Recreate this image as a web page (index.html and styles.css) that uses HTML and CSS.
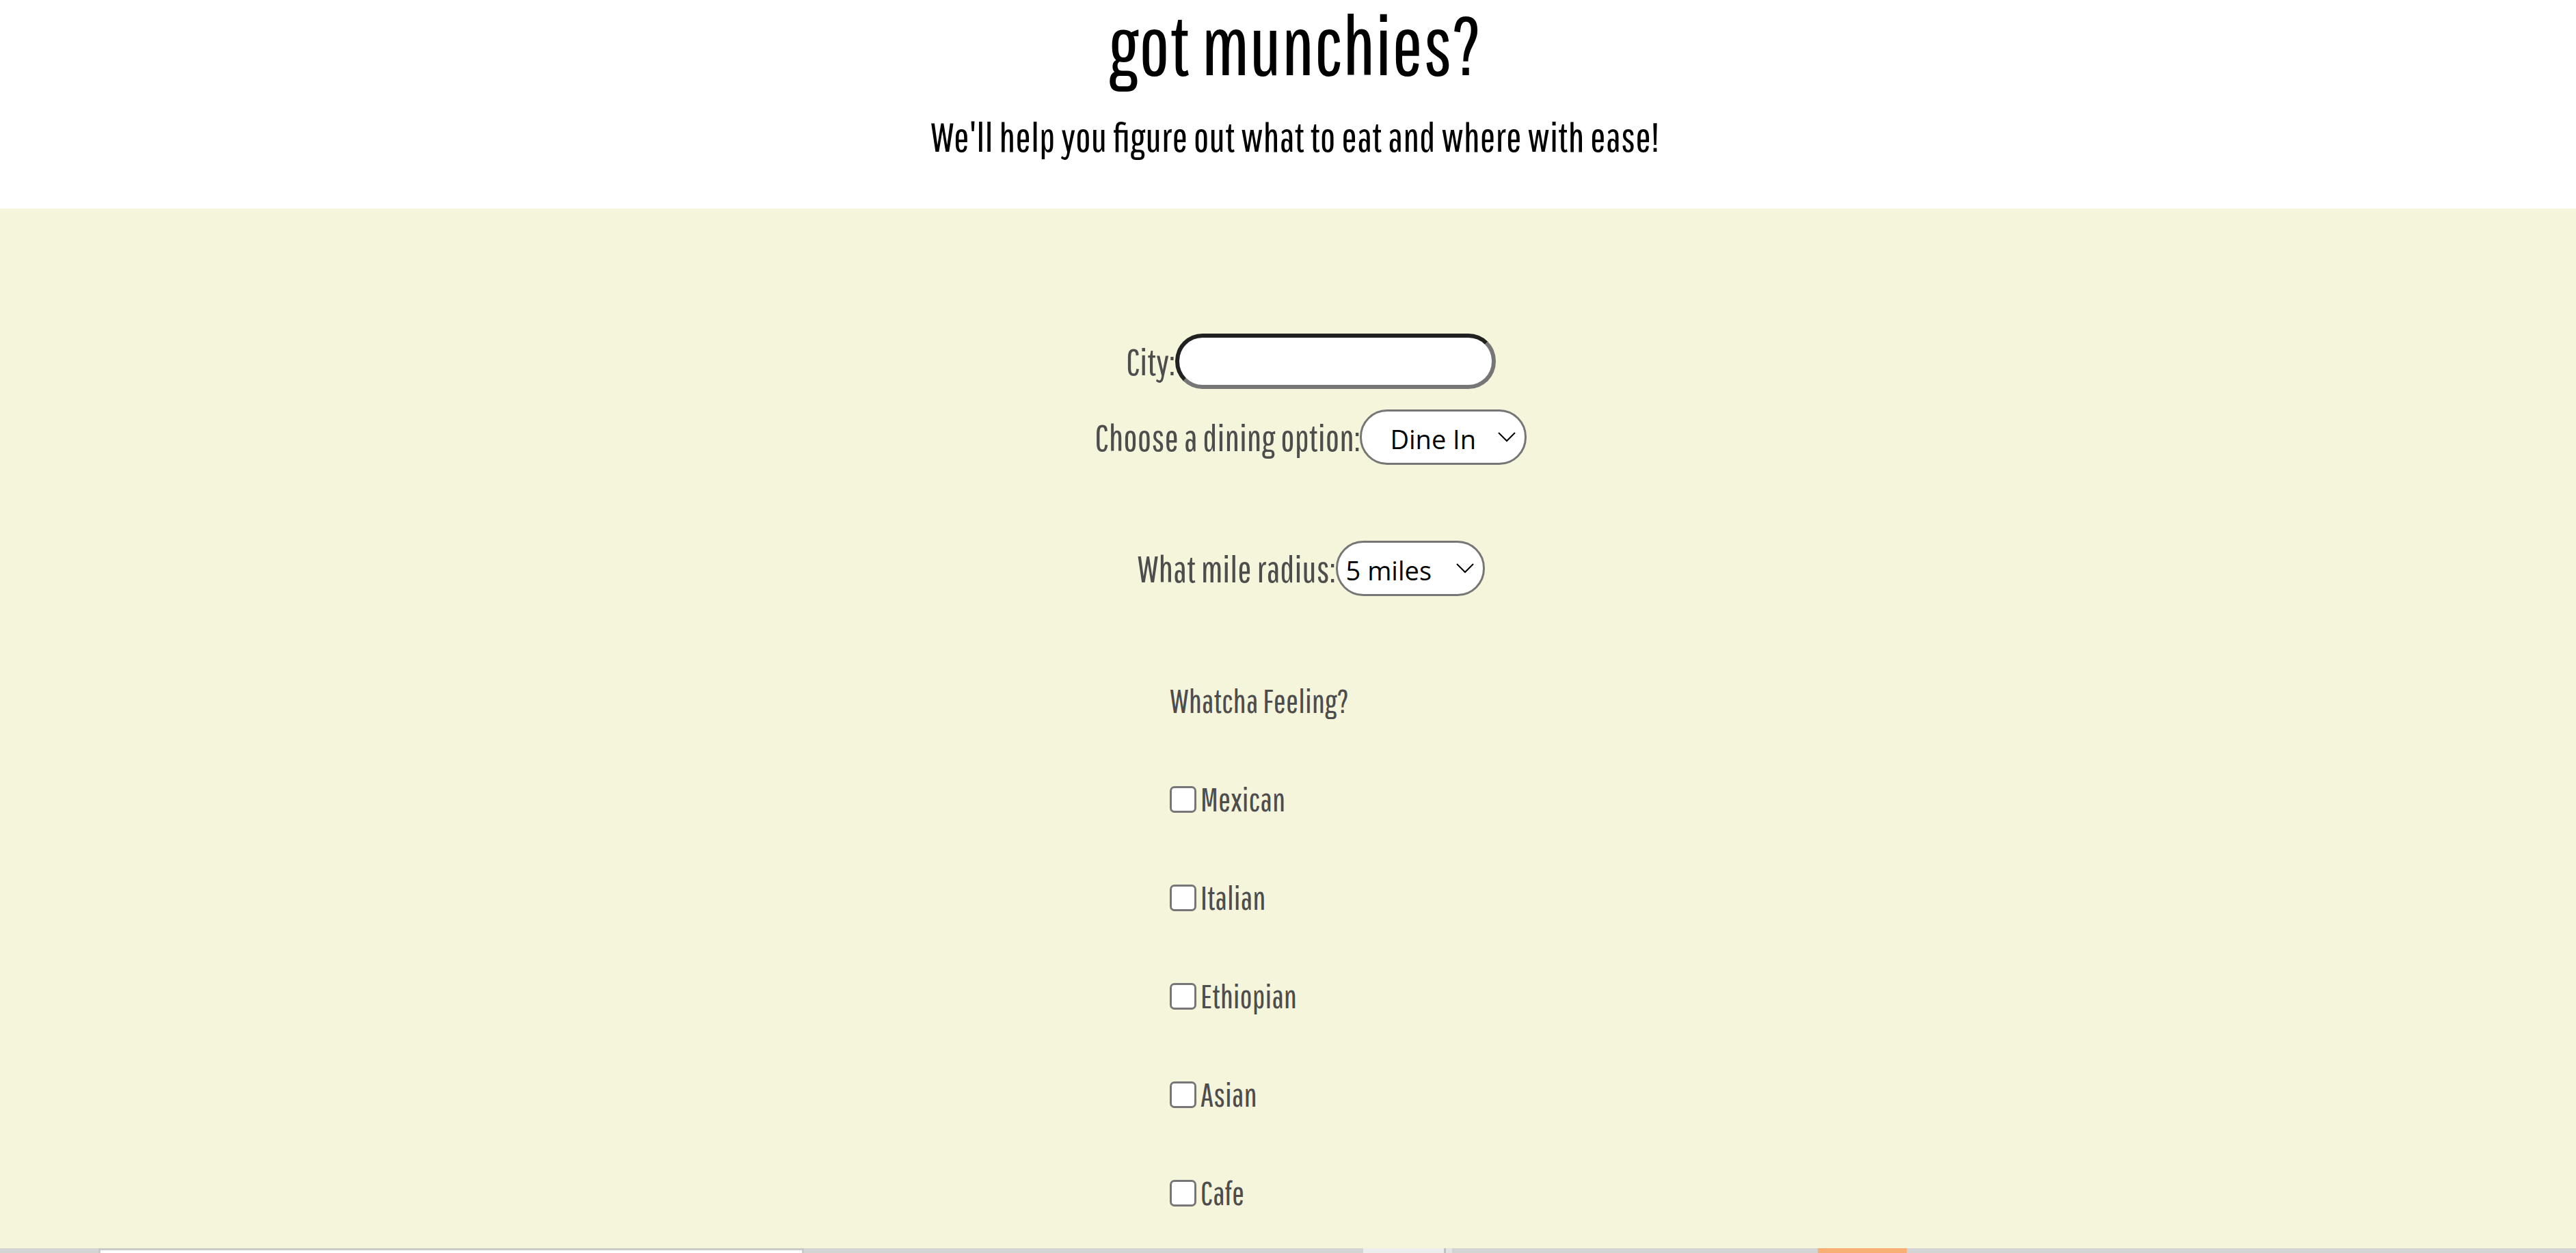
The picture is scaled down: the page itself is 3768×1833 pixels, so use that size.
FILE: index.html
```html
<!DOCTYPE html>
<html lang="en">
<head>
  <meta charset="utf-8">
  <meta name="viewport" content="width=device-width, initial-scale=1">
  <title>got munchies?</title>
  <link rel="stylesheet" href="styles.css">
</head>
<body>
  <header class="hero">
    <h1 class="hero-title">got munchies?</h1>
    <p class="hero-tagline">We'll help you figure out what to eat and where with ease!</p>
  </header>

  <main class="search">
    <form class="search-form">
      <div class="field">
        <label for="city">City:</label>
        <input class="city-input" id="city" name="city" type="text">
      </div>
      <div class="field field-spaced">
        <label for="dining">Choose a dining option:</label>
        <span class="select-wrap">
          <select class="pill-select dining-select" id="dining" name="dining">
            <option>Dine In</option>
            <option>Takeout</option>
          </select>
          <svg class="chevron" viewBox="0 0 28 16" aria-hidden="true"><path d="M2 2l12 12L26 2"/></svg>
        </span>
      </div>
      <div class="field">
        <label for="radius">What mile radius:</label>
        <span class="select-wrap">
          <select class="pill-select radius-select" id="radius" name="radius">
            <option>5 miles</option>
            <option>10 miles</option>
          </select>
          <svg class="chevron" viewBox="0 0 28 16" aria-hidden="true"><path d="M2 2l12 12L26 2"/></svg>
        </span>
      </div>
      <fieldset class="cuisines">
        <legend class="cuisine-row">Whatcha Feeling?</legend>
        <label class="cuisine-row"><input class="check" type="checkbox" name="cuisine" value="mexican">Mexican</label>
        <label class="cuisine-row"><input class="check" type="checkbox" name="cuisine" value="italian">Italian</label>
        <label class="cuisine-row"><input class="check" type="checkbox" name="cuisine" value="ethiopian">Ethiopian</label>
        <label class="cuisine-row"><input class="check" type="checkbox" name="cuisine" value="asian">Asian</label>
        <label class="cuisine-row"><input class="check" type="checkbox" name="cuisine" value="cafe">Cafe</label>
      </fieldset>
    </form>
  </main>

  <footer class="taskbar">
    <span class="task task-start"></span>
    <span class="task task-search"></span>
    <span class="task task-pinned"></span>
    <span class="task task-active"></span>
    <span class="task task-divider"></span>
    <span class="task task-stack"></span>
    <span class="task task-open"></span>
    <span class="task task-alert"></span>
    <span class="task task-tray"></span>
  </footer>
</body>
</html>
```

FILE: styles.css
```css
* {
  box-sizing: border-box;
}

body {
  margin: 0;
  min-height: 100vh;
  display: flex;
  flex-direction: column;
  background: #fff;
  color: #000;
  font-family: "Pathway Gothic One", "Roboto Condensed", "Liberation Sans", sans-serif;
}

.hero {
  padding: 0 0 65px 20px;
  text-align: center;
}

.hero-title {
  margin: 0;
  font-size: 120px;
  line-height: 130px;
  font-weight: 400;
}

.hero-tagline {
  margin: 0;
  padding-top: 30px;
  font-size: 60px;
  line-height: 80px;
}

.search {
  flex: 1;
  padding: 183px 0 9px 67px;
  background: #f5f5dc;
  color: #4d4d4d;
}

.search-form {
  display: flex;
  flex-direction: column;
  align-items: center;
}

.field {
  display: flex;
  align-items: center;
  margin-bottom: 30px;
  font-size: 54px;
  line-height: 81px;
}

.field-spaced {
  margin-bottom: 111px;
}

.city-input {
  width: 469px;
  height: 81px;
  padding: 0 30px;
  border: 6px solid;
  border-color: #212121 #767676 #767676 #212121;
  border-radius: 40px;
  background: #fff;
  font: 38px "Open Sans", sans-serif;
}

.select-wrap {
  position: relative;
  display: flex;
}

.pill-select {
  appearance: none;
  height: 81px;
  padding: 4px 0 0 12px;
  border: 3px solid #767676;
  border-radius: 40px;
  background: #fff;
  color: #000;
  font: 38px "Open Sans", sans-serif;
}

.dining-select {
  width: 244px;
  padding-left: 41px;
}

.radius-select {
  width: 218px;
}

.chevron {
  position: absolute;
  top: 32px;
  right: 15px;
  width: 28px;
  height: 16px;
  fill: none;
  stroke: #000;
  stroke-width: 2;
  pointer-events: none;
}

.cuisines {
  width: 413px;
  margin: 51px 0 0;
  padding: 0;
  border: 0;
}

.cuisine-row {
  display: flex;
  align-items: center;
  gap: 6px;
  padding: 0;
  font-size: 48px;
  line-height: 144px;
}

.check {
  appearance: none;
  width: 39px;
  height: 39px;
  margin: 0;
  border: 3px solid #767676;
  border-radius: 7px;
  background: #fff;
}

.taskbar {
  display: flex;
  height: 7px;
  background: #d4d4d4;
}

.task-start {
  width: 144px;
}

.task-search {
  width: 1032px;
  border: 3px solid #cacaca;
  border-bottom: 0;
  background: #fff;
}

.task-pinned {
  width: 818px;
}

.task-active {
  width: 118px;
  background: #eee;
}

.task-divider {
  width: 3px;
  background: #c2c2c2;
}

.task-stack {
  width: 9px;
  background: #e3e3e3;
}

.task-open {
  width: 535px;
}

.task-alert {
  width: 130px;
  background: #f9ae74;
}

.task-tray {
  flex: 1;
}
```
